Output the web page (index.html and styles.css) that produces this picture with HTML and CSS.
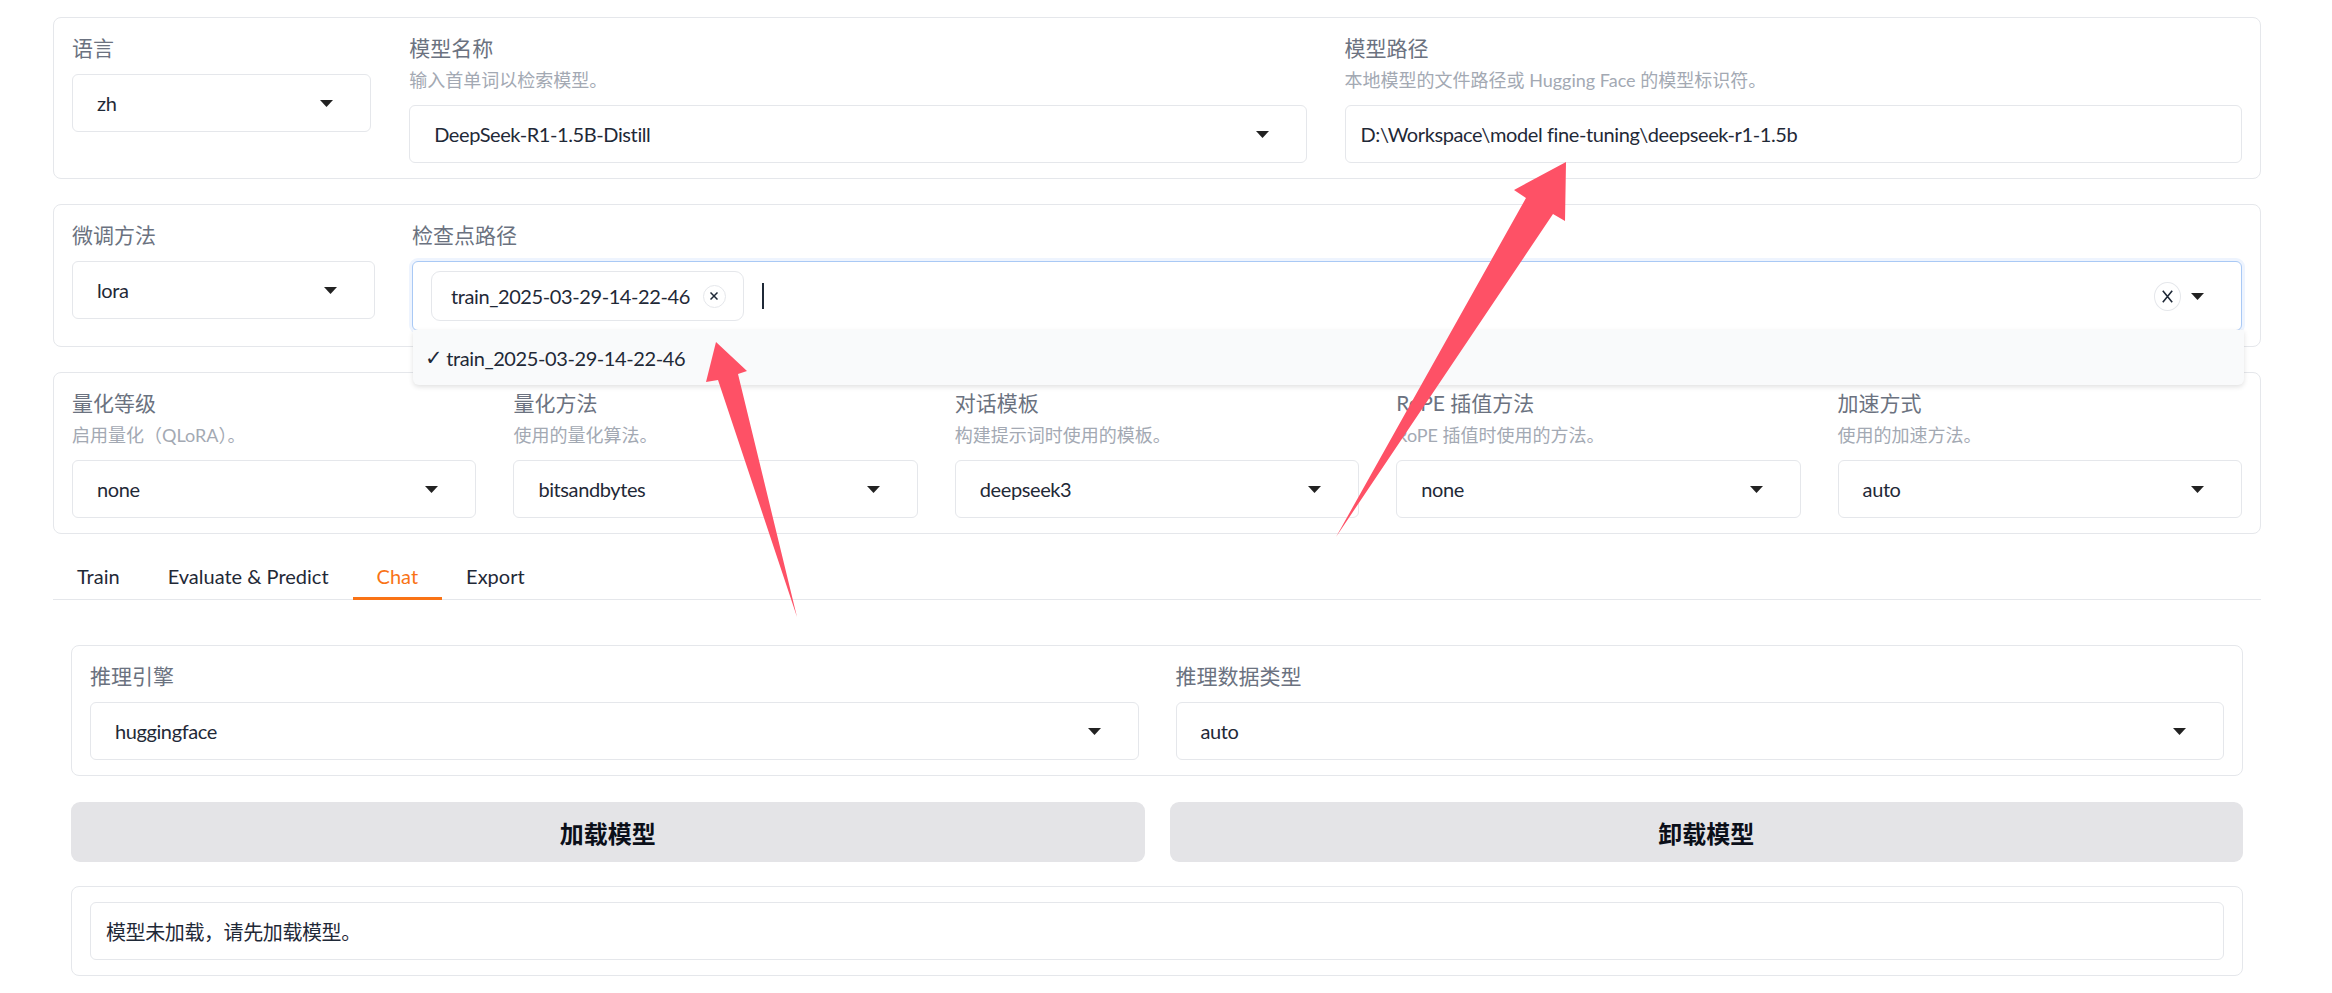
FILE: index.html
```html
<!DOCTYPE html>
<html lang="zh">
<head>
<meta charset="utf-8">
<title>LLaMA Board</title>
<link rel="stylesheet" href="styles.css">
</head>
<body>
<div class="page">
  <section class="panel">
    <div class="row row-a">
      <div class="field">
        <div class="label">语言</div>
        <div class="control select"><span>zh</span><svg class="caret" viewBox="0 0 13 7"><path d="M0 0H13L6.5 7Z"/></svg></div>
      </div>
      <div class="field">
        <div class="label">模型名称</div>
        <div class="info">输入首单词以检索模型。</div>
        <div class="control select"><span>DeepSeek-R1-1.5B-Distill</span><svg class="caret" viewBox="0 0 13 7"><path d="M0 0H13L6.5 7Z"/></svg></div>
      </div>
      <div class="field">
        <div class="label">模型路径</div>
        <div class="info">本地模型的文件路径或 Hugging Face 的模型标识符。</div>
        <div class="control text">D:\Workspace\model fine-tuning\deepseek-r1-1.5b</div>
      </div>
    </div>
  </section>

  <section class="panel">
    <div class="row row-b">
      <div class="field">
        <div class="label">微调方法</div>
        <div class="control select"><span>lora</span><svg class="caret" viewBox="0 0 13 7"><path d="M0 0H13L6.5 7Z"/></svg></div>
      </div>
      <div class="field">
        <div class="label">检查点路径</div>
        <div class="control multi">
          <div class="chip">
            <span>train_2025-03-29-14-22-46</span>
            <span class="chip-x"><svg viewBox="0 0 8 8"><path d="M0.5 0.5L7.5 7.5M7.5 0.5L0.5 7.5"/></svg></span>
          </div>
          <span class="cursor"></span>
          <span class="spacer"></span>
          <span class="clear"><svg viewBox="0 0 11 13"><path d="M0.8 0.8L10.2 12.2M10.2 0.8L0.8 12.2"/></svg></span>
          <svg class="caret" viewBox="0 0 13 7"><path d="M0 0H13L6.5 7Z"/></svg>
          <div class="popup"><span class="check">✓</span> train_2025-03-29-14-22-46</div>
        </div>
      </div>
    </div>
  </section>

  <section class="panel">
    <div class="row row-c">
      <div class="field">
        <div class="label">量化等级</div>
        <div class="info">启用量化（QLoRA）。</div>
        <div class="control select"><span>none</span><svg class="caret" viewBox="0 0 13 7"><path d="M0 0H13L6.5 7Z"/></svg></div>
      </div>
      <div class="field">
        <div class="label">量化方法</div>
        <div class="info">使用的量化算法。</div>
        <div class="control select"><span>bitsandbytes</span><svg class="caret" viewBox="0 0 13 7"><path d="M0 0H13L6.5 7Z"/></svg></div>
      </div>
      <div class="field">
        <div class="label">对话模板</div>
        <div class="info">构建提示词时使用的模板。</div>
        <div class="control select"><span>deepseek3</span><svg class="caret" viewBox="0 0 13 7"><path d="M0 0H13L6.5 7Z"/></svg></div>
      </div>
      <div class="field">
        <div class="label">RoPE 插值方法</div>
        <div class="info">RoPE 插值时使用的方法。</div>
        <div class="control select"><span>none</span><svg class="caret" viewBox="0 0 13 7"><path d="M0 0H13L6.5 7Z"/></svg></div>
      </div>
      <div class="field">
        <div class="label">加速方式</div>
        <div class="info">使用的加速方法。</div>
        <div class="control select"><span>auto</span><svg class="caret" viewBox="0 0 13 7"><path d="M0 0H13L6.5 7Z"/></svg></div>
      </div>
    </div>
  </section>

  <nav class="tabs">
    <div class="tab">Train</div>
    <div class="tab">Evaluate &amp; Predict</div>
    <div class="tab active">Chat</div>
    <div class="tab">Export</div>
  </nav>

  <div class="tabbody">
    <section class="panel">
      <div class="row row-d">
        <div class="field">
          <div class="label">推理引擎</div>
          <div class="control select"><span>huggingface</span><svg class="caret" viewBox="0 0 13 7"><path d="M0 0H13L6.5 7Z"/></svg></div>
        </div>
        <div class="field">
          <div class="label">推理数据类型</div>
          <div class="control select"><span>auto</span><svg class="caret" viewBox="0 0 13 7"><path d="M0 0H13L6.5 7Z"/></svg></div>
        </div>
      </div>
    </section>

    <div class="btns">
      <button class="btn">加载模型</button>
      <button class="btn">卸载模型</button>
    </div>

    <section class="panel out">
      <div class="control text">模型未加载，请先加载模型。</div>
    </section>
  </div>
</div>

<svg class="annot" width="2332" height="993" viewBox="0 0 2332 993">
  <polygon points="716,342 747,371 738,374 797,617 718,380 706,382"/>
  <polygon points="1566,162 1565,221 1553,214 1336,537 1526,198 1514,190"/>
</svg>
</body>
</html>
```

FILE: styles.css
```css
* {
  box-sizing: border-box;
}

body {
  margin: 0;
  background: #ffffff;
  font-family: Lato, "Noto Sans CJK SC", sans-serif;
  color: #1f2937;
  position: relative;
  width: 2332px;
  height: 993px;
  overflow: hidden;
}

.page {
  margin-left: 53px;
  width: 2208px;
  padding-top: 17px;
}

.panel {
  border: 1px solid #e5e7eb;
  border-radius: 8px;
  padding: 15px 18px;
  background: #ffffff;
}

.panel + .panel {
  margin-top: 25px;
}

.row {
  display: grid;
  column-gap: 37px;
  align-items: start;
}

.row-a {
  grid-template-columns: 1fr 3fr 3fr;
  column-gap: 38px;
}

.row-b {
  grid-template-columns: 303px 1fr;
}

.row-c {
  grid-template-columns: repeat(5, 1fr);
}

.row-d {
  grid-template-columns: 1fr 1fr;
}

.field {
  min-width: 0;
}

.label {
  font-size: 21px;
  line-height: 30px;
  color: #6b7280;
  white-space: nowrap;
}

.info {
  font-size: 18px;
  line-height: 29px;
  margin-top: 3px;
  color: #a3a9b3;
  white-space: nowrap;
}

.label + .control {
  margin-top: 11px;
}

.info + .control {
  margin-top: 10px;
}

.control {
  height: 58px;
  border: 1px solid #e5e7eb;
  border-radius: 6px;
  display: flex;
  align-items: center;
  font-size: 20px;
  letter-spacing: -0.4px;
  color: #1f2937;
  background: #ffffff;
  white-space: nowrap;
}

.select {
  padding: 0 37px 0 24px;
  justify-content: space-between;
}

.text {
  padding: 0 15px;
}

.caret {
  width: 13px;
  height: 7px;
  flex: none;
  fill: #222222;
}

.multi {
  height: auto;
  padding: 9px 37px 9px 18px;
  border-color: #a9c9f5;
  box-shadow: 0 0 0 3px #eef4fe;
  position: relative;
}

.chip {
  height: 50px;
  border: 1px solid #e5e7eb;
  border-radius: 9px;
  padding: 0 17px 0 19px;
  display: flex;
  align-items: center;
  gap: 13px;
}

.chip-x {
  width: 23px;
  height: 23px;
  border-radius: 50%;
  border: 1px solid #e5e7eb;
  display: flex;
  align-items: center;
  justify-content: center;
}

.chip-x svg {
  width: 8px;
  height: 8px;
  stroke: #1f2937;
  stroke-width: 1.5;
}

.cursor {
  width: 2px;
  height: 26px;
  background: #1f2937;
  margin-left: 18px;
}

.spacer {
  flex: 1;
}

.clear {
  width: 27px;
  height: 29px;
  border: 1px solid #e5e7eb;
  border-radius: 50%;
  display: flex;
  align-items: center;
  justify-content: center;
  margin-right: 10px;
}

.clear svg {
  width: 11px;
  height: 13px;
  stroke: #1f2937;
  stroke-width: 1.6;
}

.popup {
  position: absolute;
  left: 0;
  right: -3px;
  top: 100%;
  height: 55px;
  background: #f9fafb;
  border-radius: 0 0 6px 6px;
  box-shadow: 0 2px 5px rgba(0, 0, 0, 0.12);
  padding-left: 12px;
  display: flex;
  align-items: center;
  font-size: 20px;
  letter-spacing: -0.4px;
  color: #1f2937;
  z-index: 5;
}

.check {
  font-family: "DejaVu Sans", sans-serif;
  font-size: 21px;
  margin-right: 4px;
}

.tabs {
  display: flex;
  border-bottom: 1px solid #e5e7eb;
  margin-top: 22px;
}

.tab {
  padding: 0 24px;
  height: 44px;
  line-height: 41px;
  border-bottom: 3px solid transparent;
  margin-bottom: -1px;
  font-size: 20px;
  color: #1f2937;
  white-space: nowrap;
}

.tab.active {
  color: #f97316;
  border-bottom-color: #f97316;
}

.tabbody {
  padding: 45px 18px 0;
}

.btns {
  display: grid;
  grid-template-columns: 1fr 1fr;
  gap: 25px;
  margin-top: 26px;
}

.btn {
  height: 60px;
  background: #e4e4e7;
  border: none;
  border-radius: 9px;
  font-family: "Noto Sans CJK SC", sans-serif;
  font-weight: 700;
  font-size: 24px;
  color: #0b0f19;
}

.panel.out {
  margin-top: 24px;
}

.annot {
  position: absolute;
  left: 0;
  top: 0;
  pointer-events: none;
  fill: #fe5166;
  z-index: 20;
}
```
